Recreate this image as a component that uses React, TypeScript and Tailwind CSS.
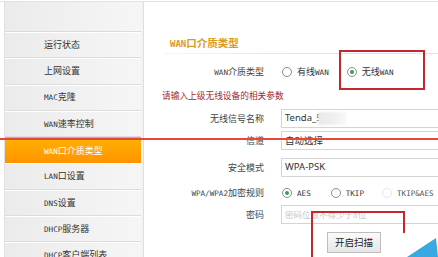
import React from "react";

const cjk = { fontFamily: '"Noto Sans CJK SC","Noto Sans",sans-serif' };
const mono = { fontFamily: '"DejaVu Sans Mono","Liberation Mono",monospace' };
const sans = { fontFamily: '"Noto Sans","Noto Sans CJK SC",sans-serif' };

function Mixed({ text, latin = "text-[7.6px]", bold }: { text: string; latin?: string; bold?: boolean }) {
  const parts = text.match(/[\x20-\x7e]+|[^\x20-\x7e]+/g) || [];
  return (
    <span className="whitespace-nowrap">
      {parts.map((p, i) =>
        /^[\x20-\x7e]+$/.test(p) ? (
          <span key={i} className={`${latin} ${bold ? "font-bold" : ""}`} style={mono}>
            {p}
          </span>
        ) : (
          <span key={i} className={bold ? "font-bold" : ""} style={cjk}>
            {p}
          </span>
        )
      )}
    </span>
  );
}

const items = [
  "运行状态",
  "上网设置",
  "MAC克隆",
  "WAN速率控制",
  "WAN口介质类型",
  "LAN口设置",
  "DNS设置",
  "DHCP服务器",
  "DHCP客户端列表",
];

function Radio({ checked, faint }: { checked?: boolean; faint?: boolean }) {
  return (
    <span
      className={`inline-flex shrink-0 items-center justify-center w-[10px] h-[10px] rounded-full border ${
        faint ? "border-[#e6e6e6]" : "border-[#8a8a8a]"
      } bg-white`}
    >
      {checked && <span className="w-[4px] h-[4px] rounded-full bg-[#3d9a56]" />}
    </span>
  );
}

function Row({ label, children }: { label: string; children?: React.ReactNode }) {
  return (
    <div className="flex items-center h-[20px]">
      <div className="w-[120px] shrink-0 text-right text-[9px] text-[#444] leading-none whitespace-nowrap">
        <Mixed text={label} />
      </div>
      <div className="ml-[17px] shrink-0 flex items-center h-full">{children}</div>
    </div>
  );
}

function Input({ children, muted }: { children?: React.ReactNode; muted?: boolean }) {
  return (
    <div
      className={`w-[170px] h-[19px] shrink-0 border border-[#d4d4d4] flex items-center pl-[3px] text-[9.5px] ${
        muted ? "text-[#c8c8c8]" : "text-[#333]"
      }`}
      style={sans}
    >
      {children}
    </div>
  );
}

export default function App() {
  return (
    <div className="relative w-[438px] h-[257px] overflow-hidden bg-white">
      <div className="h-[2px] border-b border-[#e2e2e2]" />
      <div className="flex h-[255px]">
        <div className="w-[4px] shrink-0 bg-white" />
        <div className="w-[137px] shrink-0 bg-gradient-to-r from-[#ebebeb] to-[#f6f6f6] border-l border-[#e0e0e0]">
          <div className="h-[30px] border-b border-[#dadada]" />
          {items.map((t, i) => {
            const active = i === 4;
            return (
              <div
                key={t}
                className={`h-[26.3px] flex items-center pl-[39px] text-[9px] leading-none whitespace-nowrap ${
                  active
                    ? "bg-gradient-to-b from-[#ffb200] to-[#ff9300] text-white"
                    : "text-[#333] border-b border-[#dcdcdc] shadow-[inset_0_1px_0_#ffffff]"
                }`}
              >
                <Mixed text={t} />
              </div>
            );
          })}
        </div>
        <div className="w-[3px] shrink-0 bg-[#f3f3f3] border-r border-[#dedede]" />
        <div className="flex-1 overflow-hidden">
          <div className="mt-[31px] h-[20px] flex items-center pl-[26px]">
            <span className="text-[10.5px] text-[#dc9a1e] leading-none">
              <Mixed text="WAN口介质类型" latin="text-[9px]" bold />
            </span>
          </div>
          <div className="ml-[20px] h-[1px] bg-gradient-to-r from-[#f6f6f6] via-[#e4e4e4] to-[#e4e4e4]" />
          <div className="mt-[8px]">
            <Row label="WAN介质类型">
              <span className="ml-[1px] flex">
                <Radio />
              </span>
              <span className="ml-[5px] text-[9px] text-[#333]">
                <Mixed text="有线WAN" />
              </span>
              <span className="ml-[18px] flex">
                <Radio checked />
              </span>
              <span className="ml-[5px] text-[9px] text-[#333]">
                <Mixed text="无线WAN" />
              </span>
            </Row>
            <div
              className="h-[16px] mt-[6px] flex items-center pl-[18px] text-[8.7px] text-[#a3262a] leading-none whitespace-nowrap"
              style={cjk}
            >
              请输入上级无线设备的相关参数
            </div>
            <div className="mt-[4px]">
              <Row label="无线信号名称">
                <Input>
                  <span>Tenda_5</span>
                  <span className="ml-[-4px] w-[28px] h-[13px] bg-gradient-to-r from-[#e9e9e9] via-[#eeeeee] to-[#f8f8f8] blur-[1px]" />
                </Input>
              </Row>
            </div>
            <div className="mt-[2px]">
              <Row label="信道">
                <Input>
                  <span style={cjk}>自动选择</span>
                </Input>
              </Row>
            </div>
            <div className="mt-[7px]">
              <Row label="安全模式">
                <Input>WPA-PSK</Input>
              </Row>
            </div>
            <div className="mt-[6px]">
              <Row label="WPA/WPA2加密规则">
                <span className="ml-[1px] flex">
                  <Radio checked />
                </span>
                <span className="ml-[5px] text-[9px] text-[#333]">
                  <Mixed text="AES" />
                </span>
                <span className="ml-[20px] flex">
                  <Radio />
                </span>
                <span className="ml-[5px] text-[9px] text-[#333]">
                  <Mixed text="TKIP" />
                </span>
                <span className="ml-[18px] flex">
                  <Radio faint />
                </span>
                <span className="ml-[5px] text-[9px] text-[#555]">
                  <Mixed text="TKIP&AES" />
                </span>
              </Row>
            </div>
            <div className="mt-[1px]">
              <Row label="密码">
                <Input muted>
                  <span className="text-[8.5px]" style={cjk}>
                    密码位数不得少于8位
                  </span>
                </Input>
              </Row>
            </div>
            <div className="mt-[8px] pl-[183px]">
              <div
                className="w-[54px] h-[21px] border border-[#bdbdbd] bg-gradient-to-b from-[#fafafa] to-[#e6e6e6] flex items-center justify-center text-[9.5px] text-[#222]"
                style={cjk}
              >
                开启扫描
              </div>
            </div>
          </div>
        </div>
      </div>

      {/* annotation: horizontal red line */}
      <div className="absolute left-0 right-0 top-[138px] h-[1.5px] bg-[#e7463d]" />
      {/* annotation: red box around 无线WAN */}
      <div className="absolute left-[339px] top-[50px] w-[86px] h-[40px] border-2 border-[#c3282f]" />
      {/* annotation: red box around button */}
      <div className="absolute left-[311px] top-[211px] w-[94px] h-[60px] border-2 border-[#c3282f]" />
      {/* annotation: arrow */}
      <svg className="absolute left-0 top-0" width="438" height="257" viewBox="0 0 438 257">
        <polygon points="381,257 383,241 404,233 438,224 438,257" fill="#ffffff" />
        <polygon points="407,257 436,238 438,257" fill="#3aa9e2" />
      </svg>
    </div>
  );
}
